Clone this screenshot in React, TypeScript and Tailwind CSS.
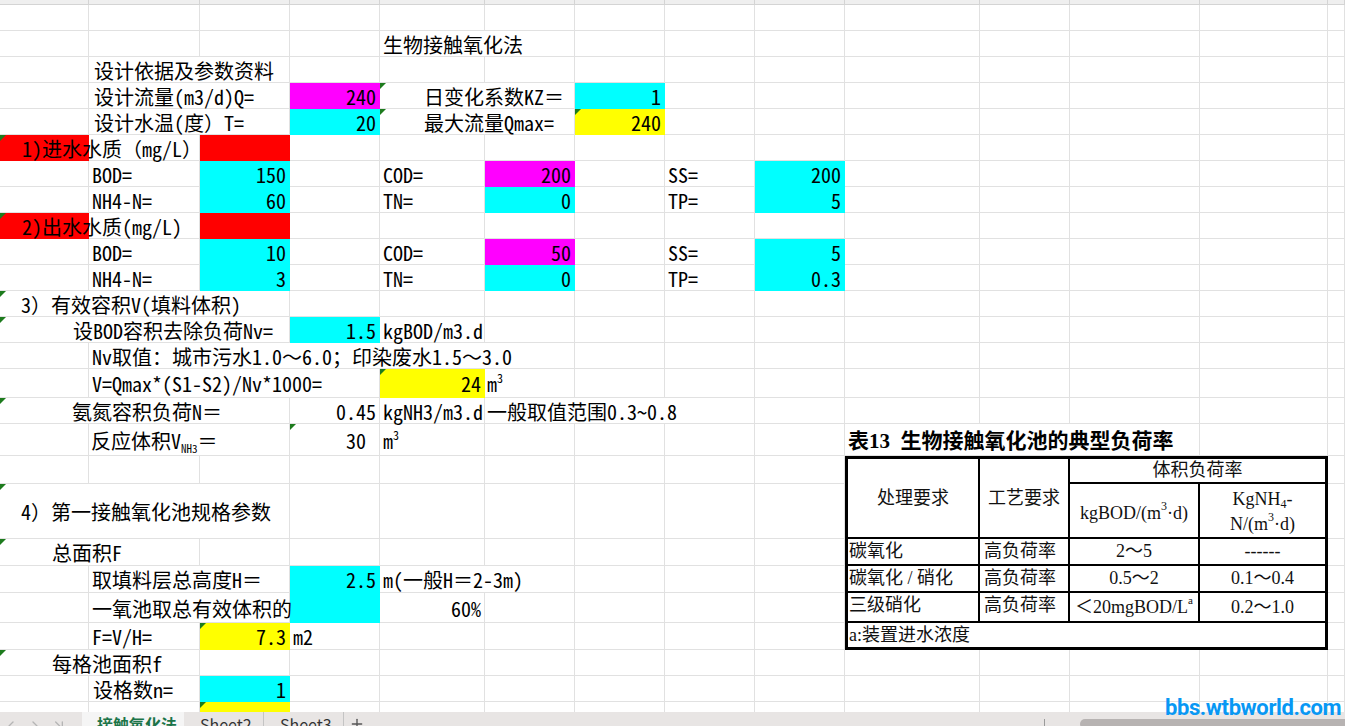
import type { ReactNode } from "react";
import { ChevronLeft, ChevronRight, ChevronLast, Plus } from "lucide-react";

const MAG = "bg-[#ff00ff]";
const CYAN = "bg-[#00ffff]";
const YEL = "bg-[#ffff00]";
const RED = "bg-[#ff0000]";

const COLS =
  "grid-cols-[89px_111px_90px_90px_105px_90px_90px_90px_90px_135px_90px_130px_128px_17px]";
const ROWS =
  "grid-rows-[26px_26px_26px_26px_26px_26px_26px_26px_26px_26px_26px_26px_26px_26px_29px_26px_32px_28px_55px_27px_27px_30px_27px_26px_26px_26px]";

const SPAN = ["", "", "col-span-2", "col-span-3", "col-span-4", "col-span-5"];

// table cells (表13)
const TB =
  "flex items-center border-black text-[18px] leading-[25px] text-[#111] font-['Liberation_Serif','Noto_Sans_CJK_SC',serif]";

type Cell = {
  c: number;
  n?: number;
  t?: ReactNode;
  bg?: string;
  right?: boolean;
  pad?: string;
  tri?: boolean;
  skip?: boolean;
  box?: string;
};

const m3 = (
  <>
    m<sup className="text-[12px] top-[-9px]">3</sup>
  </>
);

const rows: Cell[][] = [
  [],
  [{ c: 4, n: 2, t: "生物接触氧化法" }],
  [{ c: 1, n: 2, t: "设计依据及参数资料", pad: "pl-[5px]" }],
  [
    { c: 1, n: 2, t: "设计流量(m3/d)Q=", pad: "pl-[5px]" },
    { c: 3, t: "240", bg: MAG, right: true },
    { c: 4, n: 2, t: "日变化系数KZ＝", pad: "pl-[44px]", tri: true },
    { c: 6, t: "1", bg: CYAN, right: true },
  ],
  [
    { c: 1, n: 2, t: "设计水温(度）T=", pad: "pl-[5px]" },
    { c: 3, t: "20", bg: CYAN, right: true },
    { c: 4, n: 2, t: "最大流量Qmax=", pad: "pl-[44px]", tri: true },
    { c: 6, t: "240", bg: YEL, right: true, tri: true },
  ],
  [
    { c: 0, t: "1)进水水质（mg/L）", bg: RED, pad: "pl-[22px]", tri: true },
    { c: 2, bg: RED },
  ],
  [
    { c: 1, t: "BOD=" },
    { c: 2, t: "150", bg: CYAN, right: true },
    { c: 4, t: "COD=" },
    { c: 5, t: "200", bg: MAG, right: true },
    { c: 7, t: "SS=" },
    { c: 8, t: "200", bg: CYAN, right: true },
  ],
  [
    { c: 1, t: "NH4-N=" },
    { c: 2, t: "60", bg: CYAN, right: true },
    { c: 4, t: "TN=" },
    { c: 5, t: "0", bg: CYAN, right: true },
    { c: 7, t: "TP=" },
    { c: 8, t: "5", bg: CYAN, right: true },
  ],
  [
    { c: 0, t: "2)出水水质(mg/L)", bg: RED, pad: "pl-[22px]", tri: true },
    { c: 2, bg: RED },
  ],
  [
    { c: 1, t: "BOD=" },
    { c: 2, t: "10", bg: CYAN, right: true },
    { c: 4, t: "COD=" },
    { c: 5, t: "50", bg: MAG, right: true },
    { c: 7, t: "SS=" },
    { c: 8, t: "5", bg: CYAN, right: true },
  ],
  [
    { c: 1, t: "NH4-N=" },
    { c: 2, t: "3", bg: CYAN, right: true },
    { c: 4, t: "TN=" },
    { c: 5, t: "0", bg: CYAN, right: true },
    { c: 7, t: "TP=" },
    { c: 8, t: "0.3", bg: CYAN, right: true },
  ],
  [{ c: 0, n: 3, t: "3）有效容积V(填料体积)", pad: "pl-[21px]", tri: true }],
  [
    { c: 0, n: 3, t: "设BOD容积去除负荷Nv=", pad: "pl-[73px]", tri: true },
    { c: 3, t: "1.5", bg: CYAN, right: true },
    { c: 4, t: "kgBOD/m3.d" },
  ],
  [{ c: 1, n: 5, t: "Nv取值：城市污水1.0～6.0；印染废水1.5～3.0" }],
  [
    { c: 1, n: 3, t: "V=Qmax*(S1-S2)/Nv*1000=" },
    { c: 4, t: "24", bg: YEL, right: true, tri: true },
    { c: 5, t: m3, pad: "pl-[2px]" },
  ],
  [
    { c: 0, n: 3, t: "氨氮容积负荷N＝", pad: "pl-[72px]", tri: true },
    { c: 3, t: "0.45", right: true },
    { c: 4, t: "kgNH3/m3.d" },
    { c: 5, n: 3, t: "一般取值范围0.3~0.8", pad: "pl-[2px]" },
  ],
  [
    {
      c: 1,
      n: 2,
      pad: "pl-[2px]",
      t: (
        <>
          反应体积V<sub className="text-[11px] bottom-[-4px]">NH3</sub>＝
        </>
      ),
    },
    { c: 3, t: "30", right: true, pad: "pr-[13px]", tri: true },
    { c: 4, t: m3 },
    {
      c: 9,
      n: 3,
      pad: "pl-[3px]",
      t: (
        <b className="text-[21px] font-['Liberation_Serif','Noto_Sans_CJK_SC',serif]">
          表13&nbsp;&nbsp;生物接触氧化池的典型负荷率
        </b>
      ),
    },
  ],
  [
    {
      c: 9,
      box: `${TB} row-span-2 justify-center border-t-[3px] border-l-[3px] border-r-2 border-b-2`,
      t: "处理要求",
    },
    {
      c: 10,
      box: `${TB} row-span-2 justify-center border-t-[3px] border-r-2 border-b-2`,
      t: "工艺要求",
    },
    {
      c: 11,
      n: 2,
      box: `${TB} justify-center border-t-[3px] border-r-[3px] border-b-2`,
      t: "体积负荷率",
    },
  ],
  [
    { c: 0, n: 3, t: "4）第一接触氧化池规格参数", pad: "pl-[21px]", tri: true },
    { c: 9, n: 2, skip: true },
    {
      c: 11,
      box: `${TB} justify-center pt-[6px] border-r-2 border-b-2`,
      t: <span>kgBOD/({m3}·d)</span>,
    },
    {
      c: 12,
      box: `${TB} flex-col justify-center pt-[3px] border-r-[3px] border-b-2`,
      t: (
        <>
          <span>
            KgNH<sub className="text-[12px]">4</sub>-
          </span>
          <span>N/({m3}·d)</span>
        </>
      ),
    },
  ],
  [
    { c: 0, n: 2, t: "总面积F", pad: "pl-[52px]", tri: true },
    { c: 9, box: `${TB} pl-[1px] border-l-[3px] border-r-2 border-b-2`, t: "碳氧化" },
    { c: 10, box: `${TB} pl-[4px] border-r-2 border-b-2`, t: "高负荷率" },
    { c: 11, box: `${TB} justify-center border-r-2 border-b-2`, t: "2～5" },
    { c: 12, box: `${TB} justify-center border-r-[3px] border-b-2`, t: "------" },
  ],
  [
    { c: 1, n: 2, t: "取填料层总高度H＝" },
    { c: 3, t: "2.5", bg: CYAN, right: true },
    { c: 4, n: 2, t: "m(一般H＝2-3m)" },
    { c: 9, box: `${TB} pl-[1px] border-l-[3px] border-r-2 border-b-2`, t: "碳氧化 / 硝化" },
    { c: 10, box: `${TB} pl-[4px] border-r-2 border-b-2`, t: "高负荷率" },
    { c: 11, box: `${TB} justify-center border-r-2 border-b-2`, t: "0.5～2" },
    { c: 12, box: `${TB} justify-center border-r-[3px] border-b-2`, t: "0.1～0.4" },
  ],
  [
    { c: 1, n: 2, t: "一氧池取总有效体积的" },
    { c: 3, bg: CYAN },
    { c: 4, t: "60%", right: true },
    { c: 9, box: `${TB} pl-[1px] pb-[4px] border-l-[3px] border-r-2 border-b-2`, t: "三级硝化" },
    { c: 10, box: `${TB} pl-[4px] pb-[4px] border-r-2 border-b-2`, t: "高负荷率" },
    {
      c: 11,
      box: `${TB} justify-center border-r-2 border-b-2`,
      t: (
        <span>
          ＜20mgBOD/L<sup className="text-[11px] top-[-9px]">a</sup>
        </span>
      ),
    },
    { c: 12, box: `${TB} justify-center border-r-[3px] border-b-2`, t: "0.2～1.0" },
  ],
  [
    { c: 1, t: "F=V/H=" },
    { c: 2, t: "7.3", bg: YEL, right: true, tri: true },
    { c: 3, t: "m2" },
    {
      c: 9,
      n: 4,
      box: `${TB} pl-[1px] border-l-[3px] border-r-[3px] border-b-[3px]`,
      t: "a:装置进水浓度",
    },
  ],
  [{ c: 0, n: 2, t: "每格池面积f", pad: "pl-[52px]", tri: true }],
  [
    { c: 1, t: "设格数n=", pad: "pl-[4px]" },
    { c: 2, t: "1", bg: CYAN, right: true },
  ],
  [{ c: 2, bg: YEL, tri: true }],
];

function Tri() {
  return (
    <span className="absolute left-0 top-0 z-20 border-t-[6px] border-r-[6px] border-t-[#1d7b1d] border-r-transparent" />
  );
}

function renderRow(cells: Cell[], r: number) {
  const out: ReactNode[] = [];
  let col = 0;
  while (col < 14) {
    const cell = cells.find((x) => x.c === col);
    if (!cell) {
      out.push(<div key={`${r}-${col}`} className="border-r border-b border-[#e1e1e1]" />);
      col++;
      continue;
    }
    const n = cell.n ?? 1;
    const key = `${r}-${col}`;
    col += n;
    if (cell.skip) continue;
    if (cell.box) {
      out.push(
        <div key={key} className={`${cell.box} ${SPAN[n]}`}>
          {cell.t}
        </div>
      );
      continue;
    }
    const pad = cell.pad ?? (cell.right ? "pr-[3px]" : "pl-[3px]");
    out.push(
      <div
        key={key}
        className={`relative flex items-center pt-[2px] whitespace-nowrap border-r border-b ${SPAN[n]} ${
          cell.bg ? `${cell.bg} border-transparent` : "border-[#e1e1e1]"
        } ${cell.right ? "justify-end" : ""} ${pad}`}
      >
        {cell.tri && <Tri />}
        {cell.t != null && <span className="relative z-10 leading-[20px]">{cell.t}</span>}
      </div>
    );
  }
  return out;
}

export default function App() {
  return (
    <div className="relative w-[1345px] h-[726px] overflow-hidden bg-white flex flex-col">
      {/* column header (cut off) */}
      <div className={`grid ${COLS} h-[5px] shrink-0`}>
        {Array.from({ length: 14 }).map((_, i) => (
          <div key={i} className="bg-[#efefef] border-r border-b border-[#d4d4d4]" />
        ))}
      </div>

      {/* sheet */}
      <div className="h-[707px] shrink-0 overflow-hidden">
        <div
          className={`grid ${COLS} ${ROWS} text-[20px] text-black font-['Noto_Sans_Mono_CJK_SC','Noto_Sans_CJK_SC',monospace]`}
        >
          {rows.map((r, i) => renderRow(r, i))}
        </div>
      </div>

      {/* sheet tabs */}
      <div className="h-[30px] shrink-0 flex items-start bg-[#e8e5e4] font-['Noto_Sans_CJK_SC',sans-serif] text-[16px] leading-[24px]">
        <div className="w-[82px] flex items-center gap-[8px] pl-[3px] pt-[6px] text-[#b5b5b5]">
          <ChevronLeft size={16} />
          <ChevronRight size={16} />
          <ChevronLast size={16} />
        </div>
        <div className="w-[102px] h-full bg-[#f5f5f5] pl-[15px] font-bold text-[#1b7448]">接触氧化法</div>
        <div className="w-[80px] border-r border-[#c4c4c4] pl-[16px] text-[#333]">Sheet2</div>
        <div className="w-[80px] border-r border-[#c4c4c4] pl-[16px] text-[#333]">Sheet3</div>
        <div className="pl-[5px] pt-[4px] text-[#555]">
          <Plus size={16} />
        </div>
        <div className="ml-auto w-[301px] flex items-start pt-[7px]">
          <div className="h-[10px] border-l border-[#9a9a9a]" />
          <div className="ml-[35px] h-[10px] flex-1 rounded-l-[5px] bg-[#b7b3b2]" />
        </div>
      </div>

      {/* watermark */}
      <div className="absolute left-[1165px] top-[697px] text-[22px] leading-[22px] font-bold text-[#0898f4] font-['Roboto',sans-serif] tracking-[-0.4px]">
        bbs.wtbworld.com
      </div>
    </div>
  );
}
